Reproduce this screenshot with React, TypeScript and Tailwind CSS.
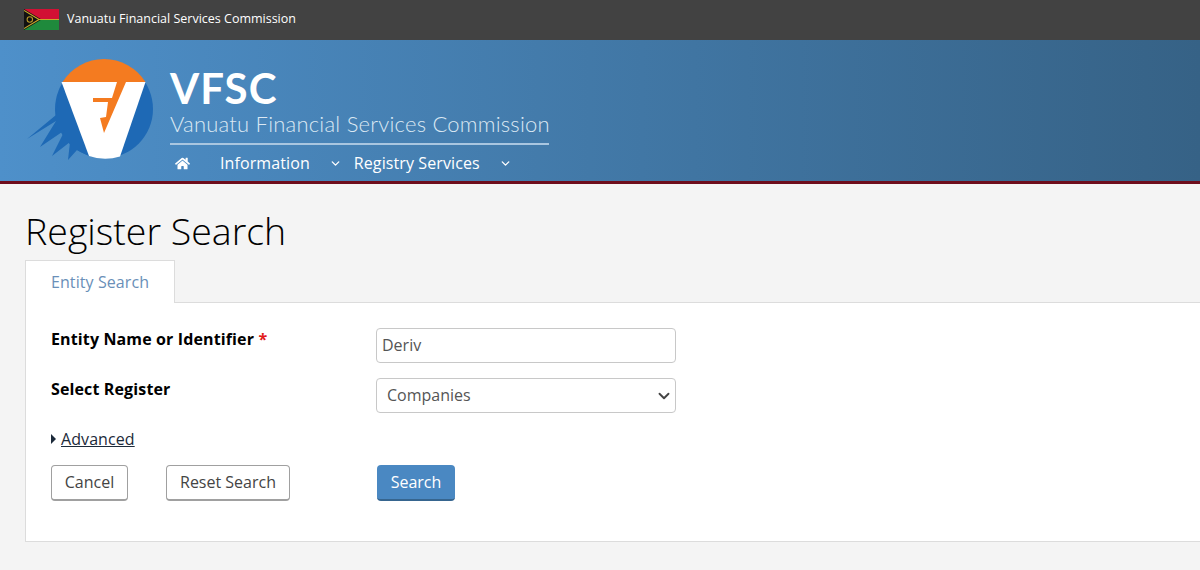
import { FaHome } from 'react-icons/fa';
import { ChevronDown } from 'lucide-react';

const openSans = 'font-["Open_Sans",sans-serif]';

function Flag() {
  return (
    <svg width="35" height="21" viewBox="0 0 36 22" preserveAspectRatio="none" className="shrink-0">
      <rect width="36" height="11" fill="#d21034" />
      <rect y="11" width="36" height="11" fill="#1f8a3c" />
      <path d="M0 0 L18 11 L0 22 Z" fill="#111" />
      <path d="M0 1.5 L15.5 11 L0 20.5 M15.5 11 H36" fill="none" stroke="#c9a92a" strokeWidth="1.2" />
      <circle cx="6" cy="11" r="2.8" fill="none" stroke="#b89a28" strokeWidth="1.1" />
    </svg>
  );
}

function Logo() {
  return (
    <svg width="140" height="112" viewBox="20 55 140 112" className="shrink-0">
      <circle cx="104" cy="109" r="49" fill="#1e69b5" />
      {/* streaks behind the V */}
      <path
        d="M60 87 L56 115 L27 139 L56 121 L40 147 L65 130 L52 156 L70 142 L68 160 L77 150 L89 156 L95 110 Z"
        fill="#1e69b5"
      />
      <path d="M62.5 82 A49 49 0 0 1 145.5 82 Z" fill="#f47b20" />
      <path d="M61.5 82 H145.5 L120 156.5 A49 49 0 0 1 89 156 Z" fill="#fff" />
      <path d="M117 82 H126 L104 133 L100 118 L106 117 L108 102 H93 V98 H112 Z" fill="#f47b20" />
    </svg>
  );
}

function NavItem({ label, gap }: { label: string; gap: string }) {
  return (
    <span className={`flex items-center text-white text-[16px] tracking-[0.1px] ${gap}`}>
      {label}
      <ChevronDown size={13} strokeWidth={2.5} />
    </span>
  );
}

function Field({ label, required, children }: { label: string; required?: boolean; children: React.ReactNode }) {
  return (
    <div className="flex items-start">
      <label className="w-[325px] text-[16px] leading-[22px] font-bold tracking-[0.13px] text-black">
        {label} {required && <span className="text-[#e21b1b]">*</span>}
      </label>
      {children}
    </div>
  );
}

export default function App() {
  return (
    <div className={`h-[570px] overflow-hidden bg-[#f4f4f4] ${openSans}`}>
      <div className="flex h-10 items-center gap-2 bg-[#424242] pb-[2px] pl-6 text-[12.5px] text-white">
        <Flag />
        <span>Vanuatu Financial Services Commission</span>
      </div>

      <header className="flex h-[144px] border-b-[3px] border-[#6e0d1c] bg-gradient-to-r from-[#4e90ca] to-[#366286] pl-5 pt-[15px]">
        <Logo />
        <div className="ml-[10px] w-[379px]">
          <div className='mt-[12px] h-[42px] font-["Lato",sans-serif] text-[42px] leading-[42px] font-bold tracking-[1px] text-white'>VFSC</div>
          <div className='h-[30px] font-["Lato",sans-serif] text-[22px] leading-[30px] font-light tracking-[0.22px] whitespace-nowrap text-[#dbe8f3]'>Vanuatu Financial Services Commission</div>
          <div className="mt-[4px] h-[2px] bg-[#a9c6e0]" />
          <nav className="mt-[6px] flex h-[24px] items-center">
            <FaHome className="ml-[5px] text-[15px] text-white" />
            <span className="ml-[30px]"><NavItem label="Information" gap="gap-[19px]" /></span>
            <span className="ml-[12px]"><NavItem label="Registry Services" gap="gap-[19px]" /></span>
          </nav>
        </div>
      </header>

      <main className="pl-[25px]">
        <h1 className="pt-[21px] text-[37.5px] leading-[52px] font-light text-black">Register Search</h1>
        <div className="relative z-10 mt-[3px] -mb-px flex h-[43px] w-[150px] items-center border border-b-0 border-[#dcdcdc] bg-white pl-[25px] text-[16px] tracking-[0.08px] text-[#6a8fb8]">
          Entity Search
        </div>
        <section className="h-[240px] border border-r-0 border-[#dcdcdc] bg-white pl-[25px] pt-[25px]">
          <Field label="Entity Name or Identifier" required>
            <input
              readOnly
              value="Deriv"
              className="h-[35px] w-[300px] rounded-[4px] border border-[#c8c8c8] bg-white px-[5px] pb-[2px] text-[16px] text-[#555]"
            />
          </Field>
          <div className="mt-[15px]">
            <Field label="Select Register">
              <div className="relative">
                <select className="h-[35px] w-[300px] appearance-none rounded-[4px] border border-[#c8c8c8] bg-white px-[10px] pb-[2px] text-[16px] text-[#555]">
                  <option>Companies</option>
                </select>
                <ChevronDown size={18} strokeWidth={2.5} className="pointer-events-none absolute top-[9px] right-[3px] text-[#444]" />
              </div>
            </Field>
          </div>
          <div className="mt-[15px] flex h-[22px] items-center text-[16px] tracking-[0.08px] text-[#1c2a3a]">
            <span className="mr-[5px] h-0 w-0 border-y-[5px] border-l-[5px] border-y-transparent border-l-[#1c2a3a]" />
            <span className="underline">Advanced</span>
          </div>
          <div className="mt-[15px] flex items-start">
            <button className="h-[36px] w-[77px] rounded-[4px] border border-b-2 border-[#a0a0a0] bg-white pb-[2px] text-[16px] text-[#444]">Cancel</button>
            <button className="ml-[38px] h-[36px] w-[124px] rounded-[4px] border border-b-2 border-[#a0a0a0] bg-white pb-[2px] text-[16px] text-[#444]">Reset Search</button>
            <button className="ml-[87px] h-[36px] w-[78px] rounded-[4px] border-b-2 border-[#36658f] bg-[#4a88c2] text-[16px] text-white">Search</button>
          </div>
        </section>
      </main>
    </div>
  );
}
